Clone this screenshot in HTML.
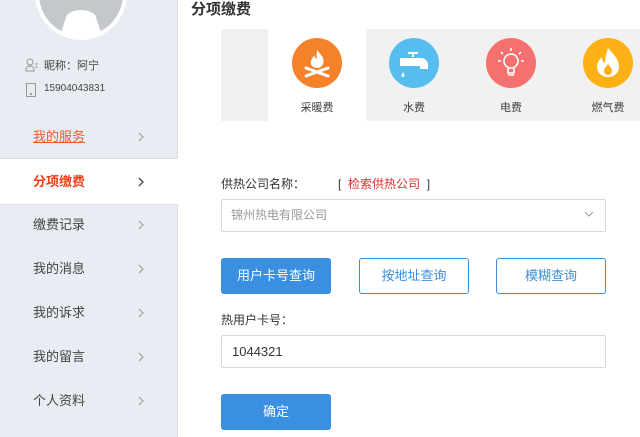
<!DOCTYPE html>
<html><head><meta charset="utf-8"><style>
*{margin:0;padding:0;box-sizing:border-box}
body{width:640px;height:437px;overflow:hidden;background:#fff;font-family:"Liberation Sans","Noto Sans CJK SC",sans-serif;position:relative;color:#333}
.a{position:absolute}
.side{left:0;top:0;width:178px;height:437px;background:#e9ecf3;border-right:1px solid #dcdfe6}
.nav{left:0;width:177px;height:45px;font-size:13px;color:#444;line-height:45px;padding-left:33px}
.nav svg{position:absolute;left:138px;top:18px}
.circ{width:50px;height:50px;border-radius:50%}
.lab{font-size:11px;color:#444;width:90px;text-align:center}
.btn{height:36px;border-radius:3px;font-size:13px;text-align:center;line-height:34px}
</style></head><body>
<div class="a side"></div>
<div class="a" style="left:35px;top:-52px;width:92px;height:92px;border-radius:50%;background:#c4c7cc;border:4px solid #fff"></div>
<div class="a" style="left:60px;top:10px;width:42px;height:26px;background:#fff;border-radius:20px 20px 0 0;clip-path:polygon(20% 0,80% 0,100% 100%,0 100%)"></div>
<svg class="a" style="left:25px;top:58px" width="14" height="14" viewBox="0 0 14 14"><circle cx="5" cy="4" r="3" fill="none" stroke="#999"/><path d="M1 13v-2a4 3 0 0 1 8 0v2z" fill="none" stroke="#999"/><path d="M10 6h3M10 9h3" stroke="#999"/></svg>
<div class="a" style="left:44px;top:57px;font-size:11px;color:#444">昵称：阿宁</div>
<svg class="a" style="left:26px;top:83px" width="10" height="14"><rect x=".5" y=".5" width="9" height="13" fill="none" stroke="#999"/><rect x="4" y="10" width="2" height="2" fill="#999"/></svg>
<div class="a" style="left:44px;top:83px;font-size:10px;color:#444">15904043831</div>
<div class="a nav" style="top:114px;color:#f05a28;text-decoration:underline">我的服务<svg width="6" height="10"><path d="M1 1l4 4-4 4" fill="none" stroke="#999"/></svg></div>
<div class="a" style="left:0;top:158px;width:177px;height:1px;background:#dcdfe6"></div>
<div class="a nav" style="top:159px;background:#fff;color:#f03c14;font-weight:bold;width:178px">分项缴费<svg width="6" height="10"><path d="M1 1l4 4-4 4" fill="none" stroke="#444" stroke-width="1.3"/></svg></div>
<div class="a" style="left:0;top:204px;width:177px;height:1px;background:#dcdfe6"></div>
<div class="a nav" style="top:202px">缴费记录<svg width="6" height="10"><path d="M1 1l4 4-4 4" fill="none" stroke="#999"/></svg></div>
<div class="a nav" style="top:246px">我的消息<svg width="6" height="10"><path d="M1 1l4 4-4 4" fill="none" stroke="#999"/></svg></div>
<div class="a nav" style="top:290px">我的诉求<svg width="6" height="10"><path d="M1 1l4 4-4 4" fill="none" stroke="#999"/></svg></div>
<div class="a nav" style="top:334px">我的留言<svg width="6" height="10"><path d="M1 1l4 4-4 4" fill="none" stroke="#999"/></svg></div>
<div class="a nav" style="top:378px">个人资料<svg width="6" height="10"><path d="M1 1l4 4-4 4" fill="none" stroke="#999"/></svg></div>

<div class="a" style="left:191px;top:-2px;font-size:15px;font-weight:bold;color:#333">分项缴费</div>
<div class="a" style="left:221px;top:29px;width:47px;height:92px;background:#f1f1f1"></div>
<div class="a" style="left:366px;top:29px;width:274px;height:92px;background:#f1f1f1"></div>
<div class="a circ" style="left:292px;top:38px;background:#f5822a"></div>
<div class="a circ" style="left:389px;top:38px;background:#57bdef"></div>
<div class="a circ" style="left:486px;top:38px;background:#f4716f"></div>
<div class="a circ" style="left:583px;top:38px;background:#fdb114"></div>
<svg class="a" style="left:292px;top:38px" width="50" height="50"><path d="M25 12c4 5 8 8 6 14-1 3-4 4-6 4s-5-1-6-4c-1-4 2-6 3-9 1 3 2 4 3 4-1-3 0-6 0-9z" fill="#fff"/><path d="M14 30l22 8M36 30l-22 8" stroke="#fff" stroke-width="3" stroke-linecap="round"/></svg>
<svg class="a" style="left:389px;top:38px" width="50" height="50"><path d="M19 15h10M24 15v4M12 21h20a6 6 0 0 1 6 6v3h-6v-3H12z" fill="#fff" stroke="#fff" stroke-width="2"/><path d="M14 34c-2 3-2 5 0 5s2-2 0-5z" fill="#fff"/></svg>
<svg class="a" style="left:486px;top:38px" width="50" height="50" fill="none" stroke="#fff" stroke-width="1.6"><circle cx="25" cy="23" r="7"/><path d="M22 30v5h6v-5M22 37h6M25 10v3M15 14l2 2M35 14l-2 2M12 23h3M35 23h3"/></svg>
<svg class="a" style="left:583px;top:38px" width="50" height="50"><path d="M25 10c6 7 11 11 11 19a11 10 0 0 1-22 0c0-5 3-8 5-10 0 3 1 5 3 6 0-6 2-11 3-15z" fill="#fff"/><path d="M25 26c2 3 4 4 4 7a4 4 0 0 1-8 0c0-3 2-4 4-7z" fill="#fdb114"/></svg>
<div class="a lab" style="left:272px;top:99px">采暖费</div>
<div class="a lab" style="left:369px;top:99px">水费</div>
<div class="a lab" style="left:466px;top:99px">电费</div>
<div class="a lab" style="left:563px;top:99px">燃气费</div>

<div class="a" style="left:221px;top:175px;font-size:12px;color:#333">供热公司名称：</div>
<div class="a" style="left:338px;top:175px;font-size:12px;color:#333">[ &nbsp;<span style="color:#e62a2a">检索供热公司</span> &nbsp;]</div>
<div class="a" style="left:221px;top:199px;width:385px;height:33px;border:1px solid #d9d9d9;border-radius:2px;font-size:12px;color:#999;line-height:31px;padding-left:9px">锦州热电有限公司</div>
<svg class="a" style="left:584px;top:211px" width="10" height="7"><path d="M1 1l4 4 4-4" fill="none" stroke="#999"/></svg>
<div class="a btn" style="left:221px;top:258px;width:110px;background:#3b8fe0;color:#fff;line-height:36px">用户卡号查询</div>
<div class="a btn" style="left:359px;top:258px;width:110px;border:1px solid #3b8fe0;color:#3b8fe0">按地址查询</div>
<div class="a btn" style="left:496px;top:258px;width:110px;border:1px solid #3b8fe0;color:#3b8fe0">模糊查询</div>
<div class="a" style="left:221px;top:311px;font-size:12px;color:#333">热用户卡号：</div>
<div class="a" style="left:221px;top:335px;width:385px;height:33px;border:1px solid #d9d9d9;border-radius:2px;font-size:13px;color:#333;line-height:31px;padding-left:10px">1044321</div>
<div class="a btn" style="left:221px;top:394px;width:110px;background:#3b8fe0;color:#fff;line-height:36px">确定</div>
</body></html>
